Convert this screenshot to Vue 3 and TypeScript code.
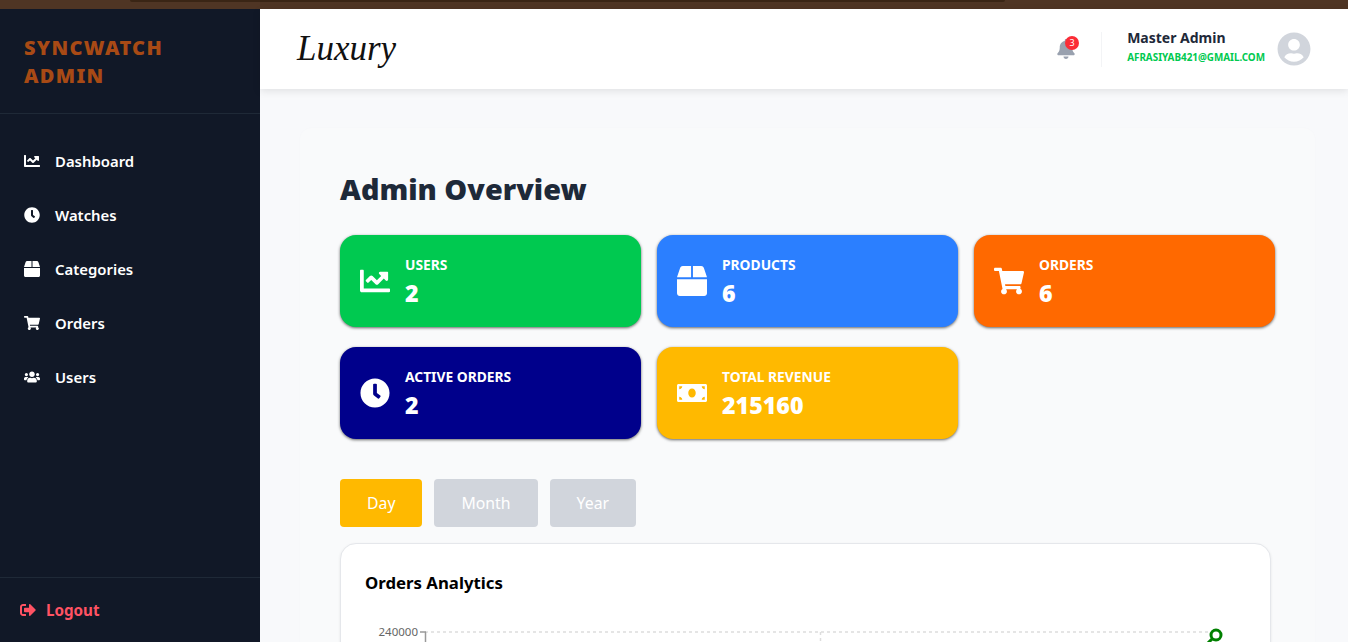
<script setup lang="ts">
interface Ico { vb: string; d: string }
const icons: Record<string, Ico> = {
  chart: { vb: '0 0 512 512', d: 'M496 384H64V80c0-8.84-7.16-16-16-16H16C7.16 64 0 71.16 0 80v336c0 17.67 14.33 32 32 32h464c8.84 0 16-7.16 16-16v-32c0-8.84-7.16-16-16-16zM464 96H345.94c-21.38 0-32.09 25.85-16.97 40.97l32.4 32.4L288 242.75l-73.37-73.37c-12.5-12.5-32.76-12.5-45.25 0l-68.69 68.69c-6.25 6.25-6.25 16.38 0 22.63l22.62 22.62c6.25 6.25 16.38 6.25 22.63 0L192 237.25l73.37 73.37c12.5 12.5 32.76 12.5 45.25 0l96-96 32.4 32.4c15.12 15.12 40.97 4.41 40.97-16.97V112c.01-8.84-7.15-16-16-16z' },
  clock: { vb: '0 0 512 512', d: 'M256,8C119,8,8,119,8,256S119,504,256,504,504,393,504,256,393,8,256,8Zm92.49,313h0l-20,25a16,16,0,0,1-22.49,2.5h0l-67-49.72a40,40,0,0,1-15-31.23V112a16,16,0,0,1,16-16h32a16,16,0,0,1,16,16V256l58,42.5A16,16,0,0,1,348.49,321Z' },
  box: { vb: '0 0 512 512', d: 'M509.5 184.6L458.9 32.8C452.4 13.2 434.1 0 413.4 0H272v192h238.7c-.4-2.5-.4-5-1.2-7.4zM240 0H98.6c-20.7 0-39 13.2-45.5 32.8L2.5 184.6c-.8 2.4-.8 4.9-1.2 7.4H240V0zM0 224v240c0 26.5 21.5 48 48 48h416c26.5 0 48-21.5 48-48V224H0z' },
  cart: { vb: '0 0 576 512', d: 'M528.12 301.319l47.273-208C578.806 78.301 567.391 64 551.99 64H159.208l-9.166-44.81C147.758 8.021 137.93 0 126.529 0H24C10.745 0 0 10.745 0 24v16c0 13.255 10.745 24 24 24h69.883l70.248 343.435C147.325 417.1 136 435.222 136 456c0 30.928 25.072 56 56 56s56-25.072 56-56c0-15.674-6.447-29.835-16.824-40h209.647C430.447 426.165 424 440.326 424 456c0 30.928 25.072 56 56 56s56-25.072 56-56c0-22.172-12.888-41.332-31.579-50.405l5.517-24.276c3.413-15.018-8.002-29.319-23.403-29.319H218.117l-6.545-32h293.145c11.206 0 20.92-7.754 23.403-18.681z' },
  users: { vb: '0 0 640 512', d: 'M96 224c35.3 0 64-28.7 64-64s-28.7-64-64-64-64 28.7-64 64 28.7 64 64 64zm448 0c35.3 0 64-28.7 64-64s-28.7-64-64-64-64 28.7-64 64 28.7 64 64 64zm32 32h-64c-17.6 0-33.5 7.1-45.1 18.6 40.3 22.1 68.9 62 75.1 109.4h66c17.7 0 32-14.3 32-32v-32c0-35.3-28.7-64-64-64zm-256 0c61.9 0 112-50.1 112-112S381.9 32 320 32 208 82.1 208 144s50.1 112 112 112zm76.8 32h-8.3c-20.8 10-43.9 16-68.5 16s-47.6-6-68.5-16h-8.3C179.6 288 128 339.6 128 403.2V432c0 26.5 21.5 48 48 48h288c26.5 0 48-21.5 48-48v-28.8c0-63.6-51.6-115.2-115.2-115.2zm-223.7-13.4C161.5 263.1 145.6 256 128 256H64c-35.3 0-64 28.7-64 64v32c0 17.7 14.3 32 32 32h65.9c6.3-47.4 34.9-87.3 75.2-109.4z' },
  money: { vb: '0 0 640 512', d: 'M608 64H32C14.33 64 0 78.33 0 96v320c0 17.67 14.33 32 32 32h576c17.67 0 32-14.33 32-32V96c0-17.67-14.33-32-32-32zM48 400v-64c35.35 0 64 28.65 64 64H48zm0-224v-64h64c0 35.35-28.65 64-64 64zm272 176c-44.19 0-80-42.99-80-96 0-53.02 35.82-96 80-96s80 42.98 80 96c0 53.03-35.83 96-80 96zm272 48h-64c0-35.35 28.65-64 64-64v64zm0-224c-35.35 0-64-28.65-64-64h64v64z' },
  bell: { vb: '0 0 448 512', d: 'M224 512c35.32 0 63.97-28.65 63.97-64H160.03c0 35.35 28.65 64 63.97 64zm215.39-149.71c-19.32-20.76-55.47-51.99-55.47-154.29 0-77.7-54.48-139.9-127.94-155.16V32c0-17.67-14.32-32-31.98-32s-31.98 14.33-31.98 32v20.84C118.56 68.1 64.08 130.3 64.08 208c0 102.3-36.15 133.53-55.47 154.29-6 6.45-8.66 14.16-8.61 21.71.11 16.4 12.98 32 32.1 32h383.8c19.12 0 32-15.6 32.1-32 .05-7.55-2.61-15.27-8.61-21.71z' },
  logout: { vb: '0 0 512 512', d: 'M497 273L329 441c-15 15-41 4.5-41-17v-96H152c-13.3 0-24-10.7-24-24v-96c0-13.3 10.7-24 24-24h136V88c0-21.4 25.9-32 41-17l168 168c9.3 9.4 9.3 24.6 0 34zM192 436v-40c0-6.6-5.4-12-12-12H96c-17.7 0-32-14.3-32-32V160c0-17.7 14.3-32 32-32h84c6.6 0 12-5.4 12-12V76c0-6.6-5.4-12-12-12H96c-53 0-96 43-96 96v192c0 53 43 96 96 96h84c6.6 0 12-5.4 12-12z' },
  user: { vb: '0 0 496 512', d: 'M248 8C111 8 0 119 0 256s111 248 248 248 248-111 248-248S385 8 248 8zm0 96c48.6 0 88 39.4 88 88s-39.4 88-88 88-88-39.4-88-88 39.4-88 88-88zm0 344c-58.7 0-111.3-26.6-146.5-68.2 18.8-35.4 55.6-59.8 98.5-59.8 2.4 0 4.8.4 7.1 1.1 13 4.2 26.6 6.9 40.9 6.9 14.3 0 28-2.7 40.9-6.9 2.3-.7 4.7-1.1 7.1-1.1 42.9 0 79.7 24.4 98.5 59.8C359.3 421.4 306.7 448 248 448z' },
}
const nav = [
  { label: 'Dashboard', icon: 'chart' },
  { label: 'Watches', icon: 'clock' },
  { label: 'Categories', icon: 'box' },
  { label: 'Orders', icon: 'cart' },
  { label: 'Users', icon: 'users' },
]
const stats = [
  { label: 'Users', value: '2', icon: 'chart', tone: 'green' },
  { label: 'Products', value: '6', icon: 'box', tone: 'blue' },
  { label: 'Orders', value: '6', icon: 'cart', tone: 'orange' },
  { label: 'Active Orders', value: '2', icon: 'clock', tone: 'navy' },
  { label: 'Total Revenue', value: '215160', icon: 'money', tone: 'amber' },
]
const ranges = ['Day', 'Month', 'Year']
</script>

<template>
  <div class="page">
    <div class="strip"><div class="strip-inner"></div></div>
    <div class="shell">
      <aside class="sidebar">
        <div class="brand">SYNCWATCH<br />ADMIN</div>
        <nav class="nav">
          <a v-for="item in nav" :key="item.label" class="nav-item">
            <svg class="nav-icon" :viewBox="icons[item.icon].vb" fill="currentColor"><path :d="icons[item.icon].d" /></svg>
            <span>{{ item.label }}</span>
          </a>
        </nav>
        <div class="logout">
          <svg class="logout-icon" :viewBox="icons.logout.vb" fill="currentColor"><path :d="icons.logout.d" /></svg>
          <span>Logout</span>
        </div>
      </aside>
      <div class="main">
        <header class="header">
          <div class="logo">Luxury</div>
          <div class="header-right">
            <div class="bell">
              <svg class="bell-icon" :viewBox="icons.bell.vb" fill="currentColor"><path :d="icons.bell.d" /></svg>
              <span class="badge">3</span>
            </div>
            <div class="account">
              <div class="who">
                <div class="name">Master Admin</div>
                <div class="email">AFRASIYAB421@GMAIL.COM</div>
              </div>
              <svg class="avatar" :viewBox="icons.user.vb" fill="currentColor"><path :d="icons.user.d" /></svg>
            </div>
          </div>
        </header>
        <main class="content">
          <section class="panel">
            <h1 class="title">Admin Overview</h1>
            <div class="grid">
              <div v-for="s in stats" :key="s.label" class="card" :class="s.tone">
                <svg class="card-icon" :viewBox="icons[s.icon].vb" fill="currentColor"><path :d="icons[s.icon].d" /></svg>
                <div class="card-text">
                  <div class="card-label">{{ s.label }}</div>
                  <div class="card-value">{{ s.value }}</div>
                </div>
              </div>
            </div>
            <div class="ranges">
              <button v-for="(r, i) in ranges" :key="r" class="range" :class="{ active: i === 0 }">{{ r }}</button>
            </div>
            <div class="chart-card">
              <h2 class="chart-title">Orders Analytics</h2>
              <svg class="chart" width="880" height="200" viewBox="0 0 880 200">
                <line x1="59" y1="8" x2="848" y2="8" stroke="#ddd" stroke-width="1.5" stroke-dasharray="3 3" />
                <line x1="454.5" y1="8" x2="454.5" y2="200" stroke="#ddd" stroke-width="1.5" stroke-dasharray="3 3" />
                <line x1="59.5" y1="8" x2="59.5" y2="200" stroke="#999" stroke-width="1.5" />
                <line x1="54" y1="8" x2="60" y2="8" stroke="#999" stroke-width="1.5" />
                <text x="52" y="12" text-anchor="end" class="tick">240000</text>
                <polyline points="850,11 801,60" fill="none" stroke="green" stroke-width="3" />
                <circle cx="850" cy="11" r="5" fill="#fff" stroke="green" stroke-width="3" />
              </svg>
            </div>
          </section>
        </main>
      </div>
    </div>
  </div>
</template>

<style>
html, body { margin: 0; height: 100%; overflow: hidden; }
</style>

<style scoped>
.page {
  height: 642px;
  display: flex;
  flex-direction: column;
  overflow: hidden;
  font-family: "Noto Sans", "Open Sans", sans-serif;
}
.strip { height: 9px; flex: none; background: #4f3524; }
.strip-inner {
  height: 2px;
  margin: 0 343px 0 130px;
  background: #3a2515;
  border-radius: 0 0 6px 6px;
}
.shell { flex: 1; display: flex; min-height: 0; }
.sidebar {
  width: 260px;
  flex: none;
  background: #111827;
  color: #fff;
  display: flex;
  flex-direction: column;
}
.brand {
  padding: 25px 24px 23px;
  font-size: 20px;
  line-height: 28px;
  font-weight: 900;
  letter-spacing: 1.3px;
  color: #a84a15;
  border-bottom: 1px solid #1f2937;
}
.nav { flex: 1; display: flex; flex-direction: column; padding-top: 20px; }
.nav-item {
  display: flex;
  align-items: center;
  height: 54px;
  padding-left: 24px;
  gap: 15px;
  font-size: 14.9px;
  font-weight: 600;
}
.nav-icon { width: 16px; height: 16px; flex: none; }
.logout {
  border-top: 1px solid #1f2937;
  height: 64px;
  display: flex;
  align-items: center;
  gap: 10px;
  padding-left: 20px;
  color: #ff5263;
  font-size: 15.2px;
  font-weight: 700;
}
.logout-icon { width: 16px; height: 16px; }
.main { flex: 1; min-width: 0; background: #f8f9fb; display: flex; flex-direction: column; }
.header {
  height: 80px;
  flex: none;
  background: #fff;
  box-shadow: 0 2px 8px rgba(0, 0, 0, 0.1);
  display: flex;
  align-items: center;
  justify-content: space-between;
  padding: 0 37px 0 37px;
  position: relative;
  z-index: 1;
}
.logo {
  font-family: "Liberation Serif", serif;
  font-style: italic;
  font-size: 35px;
  color: #111;
}
.header-right { display: flex; align-items: center; }
.bell { position: relative; width: 18px; height: 20px; margin-right: 26px; color: #99a1af; }
.bell-icon { width: 18px; height: 20px; display: block; }
.badge {
  position: absolute;
  top: -3px;
  left: 8px;
  width: 14px;
  height: 14px;
  border-radius: 50%;
  background: #fb2c36;
  color: #fff;
  font-size: 9px;
  line-height: 14px;
  text-align: center;
}
.account {
  display: flex;
  align-items: center;
  gap: 12px;
  height: 35px;
  padding-left: 25px;
  border-left: 1px solid #f3f4f6;
}
.who { margin-top: -4px; }
.name { font-size: 14px; font-weight: 700; line-height: 18px; color: #1e2939; }
.email { font-size: 9.9px; font-weight: 700; line-height: 16px; color: #00c950; margin-top: 2px; }
.avatar { width: 34px; height: 34px; color: #d1d5dc; }
.content { flex: 1; min-height: 0; overflow: hidden; padding: 39px 33px 0 40px; }
.panel {
  background: #f9fafb;
  border-radius: 12px;
  padding: 40px 40.5px 0 40px;
  height: 100%;
  box-sizing: content-box;
  box-shadow: 0 0 3px rgba(0, 0, 0, 0.015);
}
.title { margin: 0 0 26px; font-size: 28.8px; line-height: 41px; font-weight: 900; color: #1e2939; }
.grid { display: grid; grid-template-columns: repeat(3, 1fr); gap: 20px 16.5px; }
.card {
  height: 92px;
  box-sizing: border-box;
  border-radius: 16px;
  padding: 0 20px;
  display: flex;
  align-items: center;
  gap: 15px;
  color: #fff;
  box-shadow: 0 1px 3px rgba(0, 0, 0, 0.6);
}
.green { background: #00c950; }
.blue { background: #2b7fff; }
.orange { background: #ff6900; }
.navy { background: #00008b; }
.amber { background: #ffb900; }
.card-icon { width: 30px; height: 30px; flex: none; }
.card-text { padding-top: 1px; }
.card-label { font-size: 13.8px; font-weight: 700; line-height: 20px; text-transform: uppercase; }
.card-value { font-size: 23.2px; font-weight: 900; line-height: 32px; margin-top: 2px; }
.ranges { display: flex; gap: 12px; margin-top: 40px; }
.range {
  height: 48px;
  padding: 0 27px;
  border: 0;
  border-radius: 4px;
  background: #d1d5dc;
  color: #fff;
  font-family: "Noto Sans", sans-serif;
  font-size: 15.8px;
}
.range.active { background: #ffb900; }
.chart-card {
  width: 931px;
  box-sizing: border-box;
  margin-top: 16px;
  height: 300px;
  background: #fff;
  border: 1px solid #e5e7eb;
  border-radius: 16px;
  box-shadow: 0 1px 3px rgba(0, 0, 0, 0.08);
  padding: 25px 24px 24px;
}
.chart-title { margin: 0 0 27px; font-size: 16.8px; line-height: 28px; font-weight: 700; color: #000; }
.chart { display: block; margin-left: 1px; }
.tick { font-family: "Noto Sans", sans-serif; font-size: 11.5px; fill: #666; }
</style>
